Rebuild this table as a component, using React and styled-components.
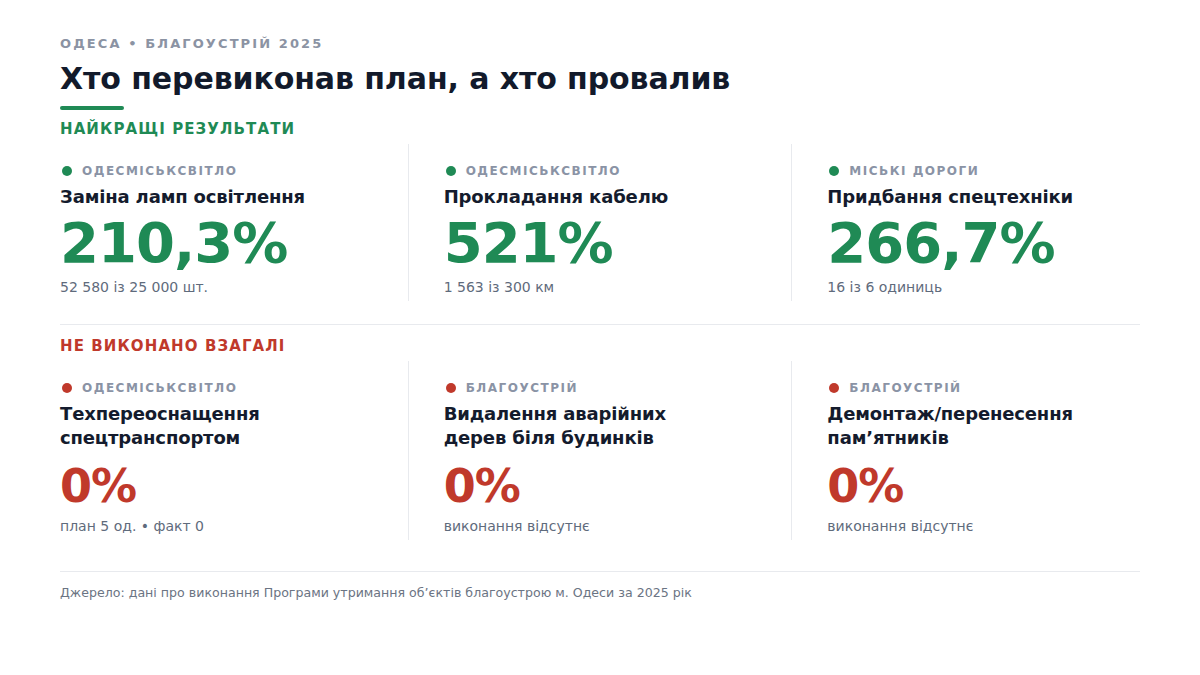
import styled, { createGlobalStyle } from "styled-components"

const GlobalStyle = createGlobalStyle`
    body {
        margin: 0;
        background: #ffffff;
        font-family: "DejaVu Sans", Verdana, sans-serif;
    }
`

const best = [
    { org: "Одесміськсвітло", name: "Заміна ламп освітлення", value: "210,3%", note: "52 580 із 25 000 шт." },
    { org: "Одесміськсвітло", name: "Прокладання кабелю", value: "521%", note: "1 563 із 300 км" },
    { org: "Міські дороги", name: "Придбання спецтехніки", value: "266,7%", note: "16 із 6 одиниць" },
]

const worst = [
    { org: "Одесміськсвітло", name: "Техпереоснащення спецтранспортом", value: "0%", note: "план 5 од. • факт 0" },
    { org: "Благоустрій", name: "Видалення аварійних дерев біля будинків", value: "0%", note: "виконання відсутнє" },
    { org: "Благоустрій", name: "Демонтаж/перенесення пам’ятників", value: "0%", note: "виконання відсутнє" },
]

const colors = {
    good: "#1f8a55",
    bad: "#c0392b",
}

const Card = ({ item, tone, small }) => (
    <Cell>
        <Org>
            <Dot $tone={tone} />
            {item.org}
        </Org>
        <Name>{item.name}</Name>
        <Value $tone={tone} $small={small}>{item.value}</Value>
        <Note>{item.note}</Note>
    </Cell>
)

const App = () => {
    return (
        <>
            <GlobalStyle />
            <Page>
                <Kicker>Одеса • Благоустрій 2025</Kicker>
                <Title>Хто перевиконав план, а хто провалив</Title>
                <Accent />
                <SectionTitle $tone="good">Найкращі результати</SectionTitle>
                <Row>
                    {best.map((item) => (
                        <Card key={item.name} item={item} tone="good" />
                    ))}
                </Row>
                <Divider />
                <SectionTitle $tone="bad" $first={false}>Не виконано взагалі</SectionTitle>
                <Row>
                    {worst.map((item) => (
                        <Card key={item.name} item={item} tone="bad" small />
                    ))}
                </Row>
                <Footer>
                    Джерело: дані про виконання Програми утримання об’єктів благоустрою м. Одеси за 2025 рік
                </Footer>
            </Page>
        </>
    )
}

export default App

const Page = styled.div`
    width: 1200px;
    height: 675px;
    box-sizing: border-box;
    padding: 36px 60px 0;
    background: #ffffff;
`

const Kicker = styled.div`
    font-size: 13px;
    line-height: 16px;
    font-weight: 700;
    letter-spacing: 2.1px;
    text-transform: uppercase;
    color: #8b93a3;
`

const Title = styled.h1`
    margin: 7px 0 0;
    font-size: 30px;
    line-height: 40px;
    font-weight: 700;
    letter-spacing: -0.1px;
    color: #121a2b;
`

const Accent = styled.div`
    margin-top: 7px;
    width: 64px;
    height: 4px;
    border-radius: 2px;
    background: ${colors.good};
`

const SectionTitle = styled.h2`
    margin: ${(props) => (props.$first === false ? "11px" : "9px")} 0 0;
    font-size: 15px;
    line-height: 20px;
    font-weight: 700;
    letter-spacing: 1.1px;
    text-transform: uppercase;
    color: ${(props) => colors[props.$tone]};
`

const Row = styled.div`
    display: flex;
    margin-top: 5px;
`

const Cell = styled.div`
    flex: 1 1 0;
    padding: 19px 35px 4px;
    display: flex;
    flex-direction: column;

    &:first-child {
        padding-left: 0;
    }

    &:last-child {
        padding-right: 0;
    }

    & + & {
        border-left: 1px solid #e8eaee;
    }
`

const Org = styled.div`
    display: flex;
    align-items: center;
    gap: 10px;
    padding-left: 2px;
    font-size: 12px;
    line-height: 16px;
    font-weight: 700;
    letter-spacing: 1.5px;
    text-transform: uppercase;
    color: #8a93a5;
`

const Dot = styled.span`
    width: 10px;
    height: 10px;
    border-radius: 50%;
    background: ${(props) => colors[props.$tone]};
`

const Name = styled.div`
    margin-top: 6px;
    max-width: 270px;
    font-size: 18px;
    line-height: 24px;
    font-weight: 700;
    letter-spacing: -0.15px;
    color: #141b2d;
`

const Value = styled.div`
    margin-top: ${(props) => (props.$small ? "8px" : "2px")};
    font-size: ${(props) => (props.$small ? "46px" : "56px")};
    line-height: ${(props) => (props.$small ? "56px" : "64px")};
    font-weight: 700;
    letter-spacing: -1px;
    color: ${(props) => colors[props.$tone]};
`

const Note = styled.div`
    margin-top: 2px;
    font-size: 14px;
    line-height: 20px;
    color: #5f6b7c;
`

const Divider = styled.div`
    margin-top: 23px;
    height: 1px;
    background: #e8eaee;
`

const Footer = styled.div`
    margin-top: 31px;
    padding-top: 13px;
    border-top: 1px solid #e8eaee;
    font-size: 12.6px;
    line-height: 16px;
    color: #6b7483;
`
